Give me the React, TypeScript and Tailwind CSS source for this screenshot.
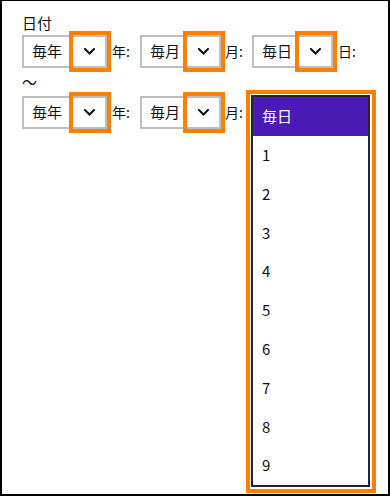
import React from "react";

const Chevron = () => (
  <svg width="11" height="7" viewBox="0 0 11 7" fill="none">
    <polyline points="1,1 5.5,5.5 10,1" stroke="#111" strokeWidth="2" strokeLinecap="square" />
  </svg>
);

type SelectProps = { value: string; w: string };

const Select = ({ value, w }: SelectProps) => (
  <div className={`relative flex h-[33px] shrink-0 border-2 border-[#bebebe] bg-white ${w}`}>
    <span className="flex flex-1 items-center pl-[8px] text-[15px] text-[#111]">{value}</span>
    <span className="flex w-[32px] items-center justify-center">
      <Chevron />
    </span>
    <span className="pointer-events-none absolute -top-[6px] -bottom-[6px] -right-[6px] w-[42px] border-4 border-[#ff8000]" />
  </div>
);

const items = ["毎日", "1", "2", "3", "4", "5", "6", "7", "8", "9"];

export default function App() {
  return (
    <div
      className="h-[496px] w-[390px] border-x-2 border-b-2 border-t border-black bg-white text-[#111]"
      style={{ fontFamily: '"Noto Sans CJK JP", "Noto Sans", sans-serif' }}
    >
      <div className="pl-[20px] pt-[11px]">
        <div className="flex h-[23px] items-center text-[15px]">日付</div>
        <div className="flex h-[33px] items-center">
          <Select value="毎年" w="w-[85px]" />
          <span className="w-[33px] pl-[5px] text-[14px]">年:</span>
          <Select value="毎月" w="w-[81px]" />
          <span className="w-[31px] pl-[4px] text-[14px]">月:</span>
          <Select value="毎日" w="w-[81px]" />
          <span className="pl-[5px] text-[14px]">日:</span>
        </div>
        <div className="flex h-[28px] items-center text-[15px]">〜</div>
        <div className="flex h-[33px] items-center">
          <Select value="毎年" w="w-[85px]" />
          <span className="w-[33px] pl-[5px] text-[14px]">年:</span>
          <Select value="毎月" w="w-[81px]" />
          <span className="w-[31px] pl-[4px] text-[14px]">月:</span>
          <div className="relative h-[33px] w-[81px] shrink-0">
            <div className="absolute -left-[1px] -top-[1px] z-10 h-[392px] w-[119px] border-2 border-[#262626] bg-white">
              <span className="pointer-events-none absolute -left-[7px] -top-[7px] -right-[8px] -bottom-[8px] border-4 border-[#ff8000]" />
              {items.map((it, i) => (
                <div
                  key={it}
                  className={`flex h-[38.8px] items-center pl-[9px] text-[15px] ${
                    i === 0 ? "bg-[#4a1ab4] text-white" : "text-[#111]"
                  }`}
                >
                  {it}
                </div>
              ))}
            </div>
          </div>
        </div>
      </div>
    </div>
  );
}
